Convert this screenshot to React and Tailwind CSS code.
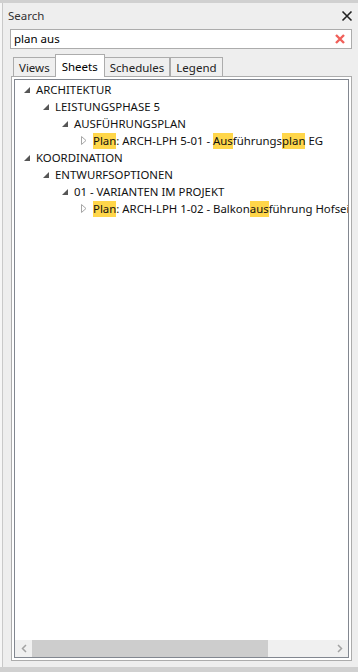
import React from "react";

const font = { fontFamily: '"Noto Sans", "Open Sans", sans-serif' };

const rows = [
  { level: 0, open: true, parts: ["ARCHITEKTUR"] },
  { level: 1, open: true, parts: ["LEISTUNGSPHASE 5"] },
  { level: 2, open: true, parts: ["AUSFÜHRUNGSPLAN"] },
  {
    level: 3,
    open: false,
    parts: [{ hl: "Plan" }, ": ARCH-LPH 5-01 - ", { hl: "Aus" }, "führungs", { hl: "plan" }, " EG"],
  },
  { level: 0, open: true, parts: ["KOORDINATION"] },
  { level: 1, open: true, parts: ["ENTWURFSOPTIONEN"] },
  { level: 2, open: true, parts: ["01 - VARIANTEN IM PROJEKT"] },
  {
    level: 3,
    open: false,
    parts: [{ hl: "Plan" }, ": ARCH-LPH 1-02 - Balkon", { hl: "aus" }, "führung Hofseite"],
  },
];

const Expander = ({ open }) => (
  <div className="w-[19px] h-[17px] flex items-center justify-center shrink-0">
    {open ? (
      <svg width="6" height="6" viewBox="0 0 6 6">
        <path d="M6 0 L6 6 L0 6 Z" fill="#565656" />
      </svg>
    ) : (
      <svg width="6" height="9" viewBox="0 0 6 9">
        <path d="M0.5 0.5 L5 4.5 L0.5 8.5 Z" fill="none" stroke="#a6a6a6" />
      </svg>
    )}
  </div>
);

const TreeRow = ({ row }) => (
  <div
    className="flex items-center h-[17px] whitespace-nowrap text-[11.4px] text-[#111]"
    style={{ paddingLeft: 2 + row.level * 19 }}
  >
    <Expander open={row.open} />
    <span className="leading-[16px]">
      {row.parts.map((p, i) =>
        typeof p === "string" ? (
          <span key={i}>{p}</span>
        ) : (
          <span key={i} className="bg-[#ffd64a] inline-block h-[16px] leading-[16px]">
            {p.hl}
          </span>
        )
      )}
    </span>
  </div>
);

const Tab = ({ label, active }) =>
  active ? (
    <div className="h-[23px] px-[6px] pt-[3px] bg-white border border-b-0 border-[#acacac] -mx-[1px] relative z-10 text-[11.5px] text-black">
      {label}
    </div>
  ) : (
    <div className="h-[20px] mt-[3px] px-[5px] pt-[1px] bg-[#efefef] border border-b-0 border-[#acacac] text-[11.5px] text-[#222]">
      {label}
    </div>
  );

export default function App() {
  return (
    <div className="w-[358px] h-[672px] flex flex-col bg-[#eeeeee]" style={font}>
      <div className="h-[3px] bg-[#d0d0d0]" />
      <div className="flex-1 flex min-h-0">
        <div className="w-[2px] bg-[#f6f6f6]" />
        <div className="w-[1px] bg-[#c9c9c9]" />
        <div className="flex-1 flex flex-col min-w-0">
          {/* title bar */}
          <div className="h-[26px] flex items-center justify-between pl-[5px] pr-[3px]">
            <span className="text-[11.5px] text-[#333]">Search</span>
            <svg width="12" height="12" viewBox="0 0 12 12" className="mr-[2px]">
              <path d="M1.5 1.5 L10.5 10.5 M10.5 1.5 L1.5 10.5" stroke="#222" strokeWidth="1.6" />
            </svg>
          </div>

          {/* search box */}
          <div className="ml-[7px] mr-[6px] h-[20px] bg-white border border-[#acacac] flex items-center justify-between pl-[3px] pr-[6px]">
            <span className="text-[11.5px] text-black">plan aus</span>
            <svg width="10" height="10" viewBox="0 0 10 10">
              <path d="M1 1 L9 9 M9 1 L1 9" stroke="#f0605a" strokeWidth="2.4" />
            </svg>
          </div>

          {/* tabs */}
          <div className="mt-[5px] ml-[10px] flex items-end h-[23px]">
            <Tab label="Views" />
            <Tab label="Sheets" active />
            <Tab label="Schedules" />
            <Tab label="Legend" />
          </div>

          {/* tab page */}
          <div className="ml-[8px] mr-[6px] -mt-[1px] flex-1 min-h-0 mb-[6px] bg-white border border-[#acacac] p-[2px] flex">
            <div className="flex-1 min-w-0 border border-[#828790] flex flex-col">
              <div className="flex-1 overflow-hidden pt-[1px]">
                {rows.map((r, i) => (
                  <TreeRow key={i} row={r} />
                ))}
              </div>
              {/* horizontal scrollbar */}
              <div className="h-[17px] bg-[#f0f0f0] flex items-stretch">
                <div className="w-[17px] flex items-center justify-center">
                  <svg width="6" height="9" viewBox="0 0 6 9">
                    <path d="M5 1 L1.5 4.5 L5 8" fill="none" stroke="#a3a3a3" strokeWidth="1.5" />
                  </svg>
                </div>
                <div className="w-[236px] bg-[#cdcdcd]" />
                <div className="flex-1" />
                <div className="w-[17px] flex items-center justify-center">
                  <svg width="6" height="9" viewBox="0 0 6 9">
                    <path d="M1 1 L4.5 4.5 L1 8" fill="none" stroke="#a3a3a3" strokeWidth="1.5" />
                  </svg>
                </div>
              </div>
            </div>
          </div>
        </div>
      </div>
      <div className="h-[5px] bg-[#d0d0d0]" />
    </div>
  );
}
